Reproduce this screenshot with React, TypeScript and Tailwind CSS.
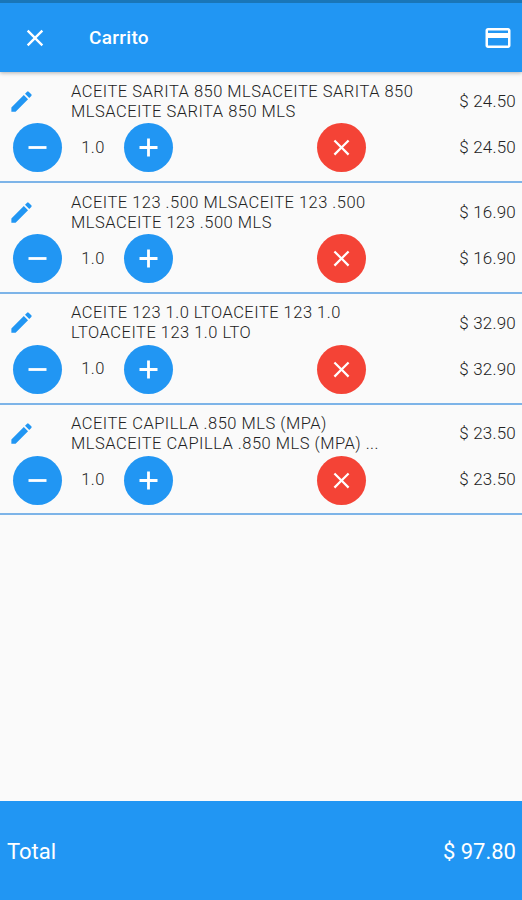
import { MdClose, MdEdit, MdPayment } from "react-icons/md";

const items = [
  { lines: ["ACEITE SARITA 850 MLSACEITE SARITA 850", "MLSACEITE SARITA 850 MLS"], quantity: "1.0", price: "$ 24.50", subtotal: "$ 24.50" },
  { lines: ["ACEITE 123 .500 MLSACEITE 123 .500", "MLSACEITE 123 .500 MLS"], quantity: "1.0", price: "$ 16.90", subtotal: "$ 16.90" },
  { lines: ["ACEITE 123 1.0 LTOACEITE 123 1.0", "LTOACEITE 123 1.0 LTO"], quantity: "1.0", price: "$ 32.90", subtotal: "$ 32.90" },
  { lines: ["ACEITE CAPILLA .850 MLS (MPA)", "MLSACEITE CAPILLA .850 MLS (MPA) ..."], quantity: "1.0", price: "$ 23.50", subtotal: "$ 23.50" }
];

const StepIcon = ({ plus = false }: { plus?: boolean }) => (
  <svg viewBox="0 0 27 27" className="size-[27px]" fill="none" stroke="currentColor" strokeWidth="2.8">
    <path d={plus ? "M4.5 13.5H22.5M13.5 4.5V22.5" : "M4.5 13.5H22.5"} />
  </svg>
);

const CartItem = ({ item }: { item: (typeof items)[number] }) => {
  return (
    <li className="h-[110.7px] border-b-2 border-[#7db4e8] pt-[9.4px]">
      <div className="flex h-10 items-center">
        <button className="w-[71px] shrink-0 pb-px pl-[8px]" aria-label="Editar">
          <MdEdit className="size-[27px] text-[#2196f3]" />
        </button>
        <div className="flex-1 text-[16.5px] leading-[20px] tracking-[0.49px] whitespace-nowrap">
          {item.lines.map((line) => (
            <p key={line}>{line}</p>
          ))}
        </div>
        <span className="pr-[6px] text-[17px] tracking-[0.2px]">{item.price}</span>
      </div>
      <div className="flex h-[52px] items-center pl-[13px]">
        <button className="flex size-[49px] items-center justify-center rounded-full bg-[#2196f3] text-white" aria-label="Quitar">
          <StepIcon />
        </button>
        <span className="w-[62px] pt-px text-center text-[16.5px] tracking-[0.42px]">{item.quantity}</span>
        <button className="flex size-[49px] items-center justify-center rounded-full bg-[#2196f3] text-white" aria-label="Agregar">
          <StepIcon plus />
        </button>
        <button className="ml-[144px] flex size-[49px] items-center justify-center rounded-full bg-[#f44336] text-white" aria-label="Eliminar">
          <MdClose className="size-[27px]" />
        </button>
        <span className="ml-auto pr-[6px] text-[17px] tracking-[0.2px]">{item.subtotal}</span>
      </div>
    </li>
  );
};

export default function App() {
  return (
    <div className="flex h-screen flex-col bg-[#fafafa] font-['Roboto',sans-serif] font-[350] text-[#222]">
      <header className="z-10 flex h-[72px] shrink-0 items-center border-t-[3px] border-[#1976b8] bg-[#2196f3] text-white shadow-[0_1px_4px_rgba(0,0,0,0.3)]">
        <MdClose className="ml-[21px] size-[28px]" />
        <h1 className="ml-[40px] pt-px text-[19px] font-medium tracking-[0.3px]">Carrito</h1>
        <MdPayment className="mr-[9px] ml-auto size-[30px]" />
      </header>
      <ul className="flex-1 pt-[0.6px]">
        {items.map((item) => (
          <CartItem key={item.lines[0]} item={item} />
        ))}
      </ul>
      <footer className="flex h-[99px] shrink-0 items-center justify-between bg-[#2196f3] pt-[2px] pr-[6px] pl-[7px] text-[22px] font-normal text-white">
        <span>Total</span>
        <span>$ 97.80</span>
      </footer>
    </div>
  );
}
